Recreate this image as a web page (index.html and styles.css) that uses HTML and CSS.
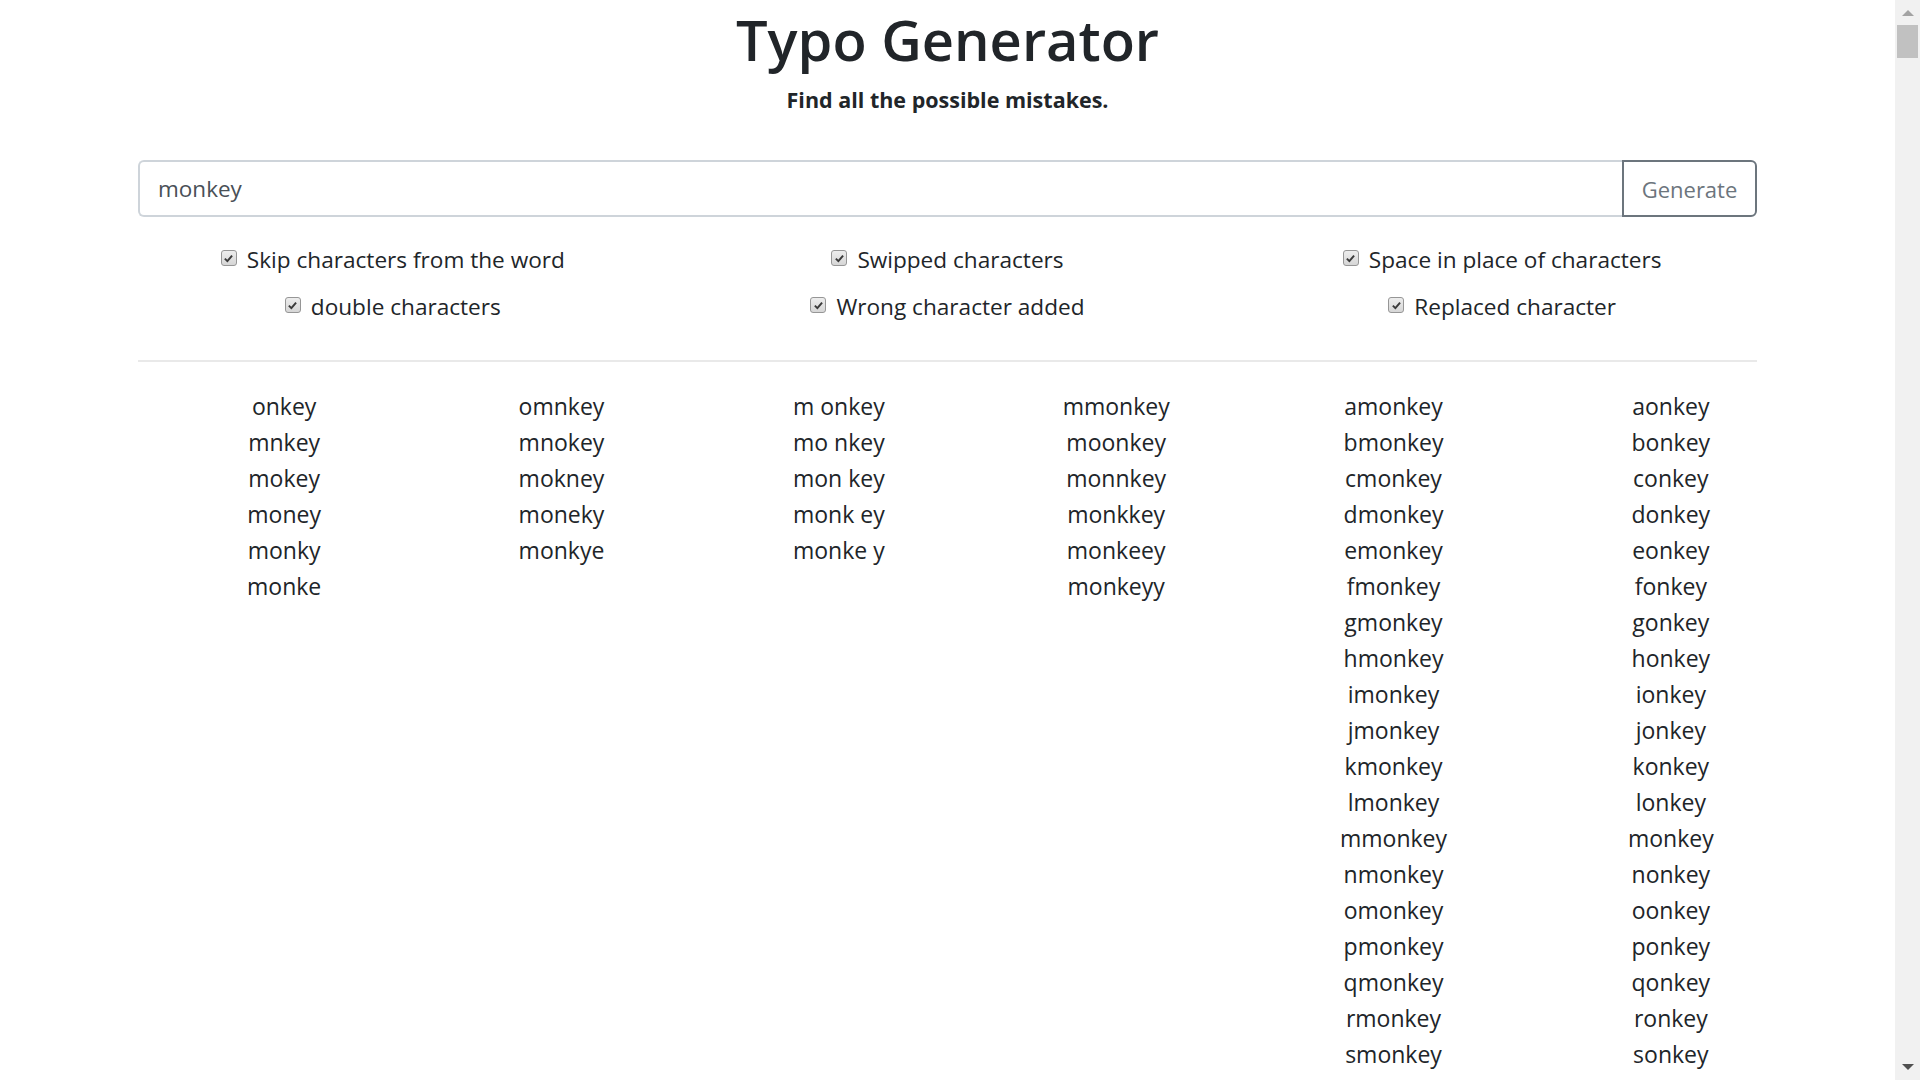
FILE: index.html
```html
<!DOCTYPE html>
<html lang="en">
<head>
<meta charset="utf-8">
<title>Typo Generator</title>
<link rel="stylesheet" href="styles.css">
</head>
<body>
<div class="page">
  <div class="container">
    <header class="head">
      <h1 class="title">Typo Generator</h1>
      <p class="subtitle">Find all the possible mistakes.</p>
    </header>

    <form class="search">
      <input class="search-input" type="text" value="monkey">
      <button class="search-btn" type="button">Generate</button>
    </form>

    <div class="options">
      <label class="opt"><span class="cb"><svg viewBox="0 0 16 16" width="16" height="16"><path d="M3.5 8.2 L6.6 11.2 L12.4 4.4" fill="none" stroke="#3a3a3a" stroke-width="2.4"/></svg></span><span>Skip characters from the word</span></label>
      <label class="opt"><span class="cb"><svg viewBox="0 0 16 16" width="16" height="16"><path d="M3.5 8.2 L6.6 11.2 L12.4 4.4" fill="none" stroke="#3a3a3a" stroke-width="2.4"/></svg></span><span>Swipped characters</span></label>
      <label class="opt"><span class="cb"><svg viewBox="0 0 16 16" width="16" height="16"><path d="M3.5 8.2 L6.6 11.2 L12.4 4.4" fill="none" stroke="#3a3a3a" stroke-width="2.4"/></svg></span><span>Space in place of characters</span></label>
      <label class="opt"><span class="cb"><svg viewBox="0 0 16 16" width="16" height="16"><path d="M3.5 8.2 L6.6 11.2 L12.4 4.4" fill="none" stroke="#3a3a3a" stroke-width="2.4"/></svg></span><span>double characters</span></label>
      <label class="opt"><span class="cb"><svg viewBox="0 0 16 16" width="16" height="16"><path d="M3.5 8.2 L6.6 11.2 L12.4 4.4" fill="none" stroke="#3a3a3a" stroke-width="2.4"/></svg></span><span>Wrong character added</span></label>
      <label class="opt"><span class="cb"><svg viewBox="0 0 16 16" width="16" height="16"><path d="M3.5 8.2 L6.6 11.2 L12.4 4.4" fill="none" stroke="#3a3a3a" stroke-width="2.4"/></svg></span><span>Replaced character</span></label>
    </div>

    <hr class="divider">

    <div class="results">
      <ul class="col">
        <li>onkey</li><li>mnkey</li><li>mokey</li><li>money</li><li>monky</li><li>monke</li>
      </ul>
      <ul class="col">
        <li>omnkey</li><li>mnokey</li><li>mokney</li><li>moneky</li><li>monkye</li>
      </ul>
      <ul class="col">
        <li>m onkey</li><li>mo nkey</li><li>mon key</li><li>monk ey</li><li>monke y</li>
      </ul>
      <ul class="col">
        <li>mmonkey</li><li>moonkey</li><li>monnkey</li><li>monkkey</li><li>monkeey</li><li>monkeyy</li>
      </ul>
      <ul class="col">
        <li>amonkey</li><li>bmonkey</li><li>cmonkey</li><li>dmonkey</li><li>emonkey</li><li>fmonkey</li><li>gmonkey</li><li>hmonkey</li><li>imonkey</li><li>jmonkey</li><li>kmonkey</li><li>lmonkey</li><li>mmonkey</li><li>nmonkey</li><li>omonkey</li><li>pmonkey</li><li>qmonkey</li><li>rmonkey</li><li>smonkey</li>
      </ul>
      <ul class="col">
        <li>aonkey</li><li>bonkey</li><li>conkey</li><li>donkey</li><li>eonkey</li><li>fonkey</li><li>gonkey</li><li>honkey</li><li>ionkey</li><li>jonkey</li><li>konkey</li><li>lonkey</li><li>monkey</li><li>nonkey</li><li>oonkey</li><li>ponkey</li><li>qonkey</li><li>ronkey</li><li>sonkey</li>
      </ul>
    </div>
  </div>
</div>
<div class="scrollbar">
  <span class="sb-arrow sb-up"></span>
  <span class="sb-thumb"></span>
  <span class="sb-track"></span>
  <span class="sb-arrow sb-down"></span>
</div>
</body>
</html>
```

FILE: styles.css
```css
html, body {
  margin: 0;
  height: 1080px;
  overflow: hidden;
}

body {
  display: flex;
  font-family: "Open Sans", "Noto Sans", sans-serif;
  color: #212529;
  background: #fff;
}

.page {
  flex: 1;
  min-width: 0;
}

.container {
  width: 1619px;
  margin: 0 auto;
}

.head {
  text-align: center;
}

.title {
  margin: 0;
  padding-top: 6px;
  font-size: 56px;
  font-weight: 600;
  line-height: 67px;
}

.subtitle {
  margin: 9.5px 0 0;
  font-size: 21.5px;
  font-weight: 700;
  line-height: 33px;
}

.search {
  display: flex;
  margin-top: 44.5px;
  height: 57px;
}

.search-input {
  flex: 1;
  min-width: 0;
  box-sizing: border-box;
  height: 57px;
  margin: 0;
  padding: 0 18px;
  border: 2px solid #ced4da;
  border-right: none;
  border-radius: 6px 0 0 6px;
  font-family: inherit;
  font-size: 22.5px;
  color: #495057;
  outline: none;
}

.search-btn {
  box-sizing: border-box;
  width: 135px;
  height: 57px;
  margin: 0;
  padding: 0;
  border: 2px solid #6c757d;
  border-radius: 0 6px 6px 0;
  background: #fff;
  font-family: inherit;
  font-size: 22px;
  color: #6c757d;
}

.options {
  display: grid;
  grid-template-columns: repeat(3, 1fr);
  row-gap: 11px;
  margin: 25px -22.5px 0;
}

.opt {
  display: flex;
  align-items: center;
  justify-content: center;
  gap: 10px;
  height: 36px;
  font-size: 22.6px;
  line-height: 36px;
}

.cb {
  display: flex;
  box-sizing: border-box;
  width: 16px;
  height: 16px;
  margin-top: -4px;
  border: 1px solid #969696;
  border-radius: 3px;
  background: linear-gradient(#ededed, #d6d6d6);
  align-items: center;
  justify-content: center;
}

.cb svg {
  width: 13px;
  height: 13px;
}

.divider {
  margin: 35px 0 0;
  border: 0;
  border-top: 2px solid #e9e9e9;
}

.results {
  display: grid;
  grid-template-columns: repeat(6, 1fr);
  margin: 26px -22.5px 0;
}

.col {
  margin: 0;
  padding: 0 22.5px 0 82.5px;
  list-style: none;
  text-align: center;
  font-size: 23px;
  line-height: 36px;
}

.scrollbar {
  display: flex;
  flex-direction: column;
  align-items: center;
  width: 25px;
  height: 1080px;
  background: #f1f1f1;
}

.sb-arrow {
  width: 0;
  height: 0;
  border-left: 6px solid transparent;
  border-right: 6px solid transparent;
}

.sb-up {
  margin-top: 10px;
  border-bottom: 6px solid #a3a3a3;
}

.sb-down {
  margin-bottom: 10px;
  border-top: 6px solid #505050;
}

.sb-thumb {
  width: 21px;
  height: 33px;
  margin-top: 9px;
  background: #c1c1c1;
}

.sb-track {
  flex: 1;
}
```
